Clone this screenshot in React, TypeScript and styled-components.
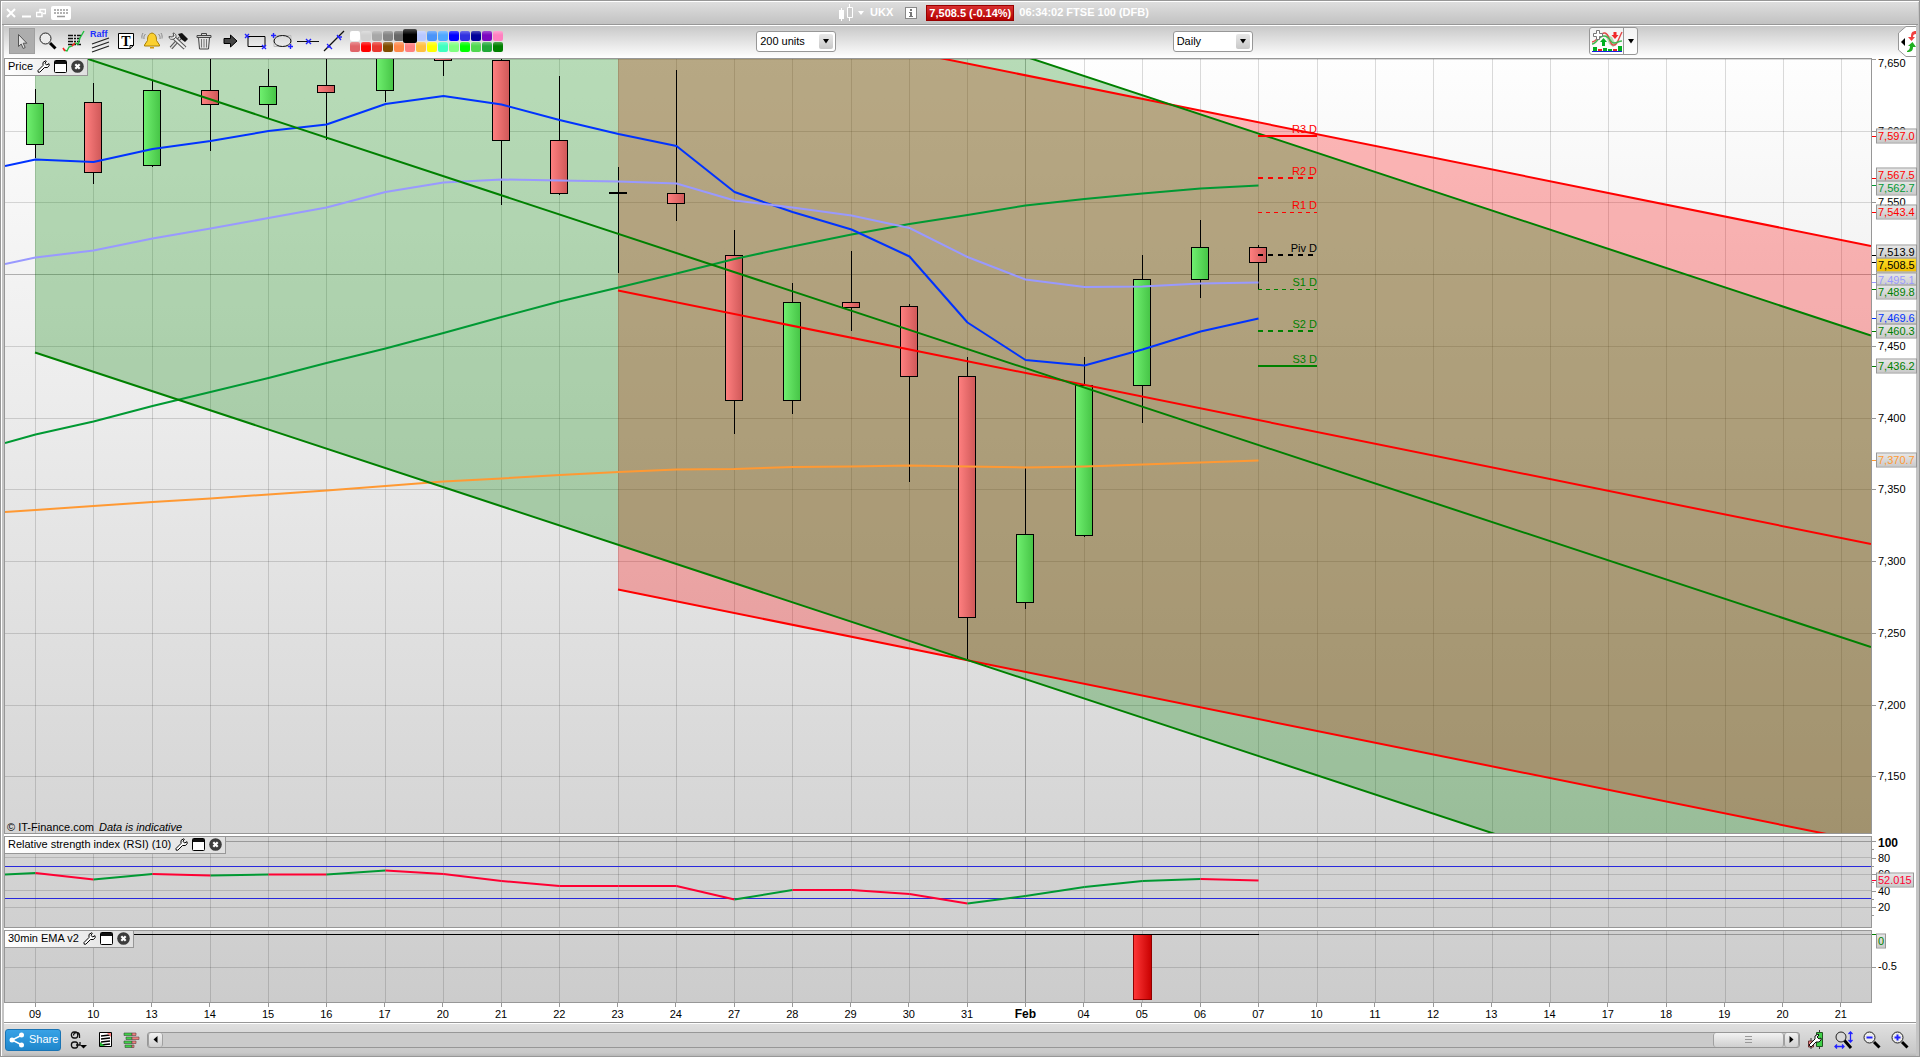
import React from 'react';
import styled, { createGlobalStyle, css } from 'styled-components';

const GlobalStyle = createGlobalStyle`
  * { box-sizing: border-box; }
  html, body { margin: 0; height: 100%; }
  body {
    font-family: "Liberation Sans", Arial, sans-serif;
    font-size: 11px;
    line-height: 13px;
    color: #000;
    background: #c0c0c0;
  }
  button, select { font: inherit; color: inherit; margin: 0; }
  svg { display: block; }
`;

const Frame = styled.div`
  display: flex;
  flex-direction: column;
  height: 100vh;
  min-height: 480px;
  border: 1px solid #979797;
  padding: 0 3px;
  background: #c4c4c4;
  box-shadow: inset 1px 1px 0 #fff;
  overflow: hidden;
`;

const TitleBar = styled.header`
  flex: none;
  display: flex;
  align-items: center;
  height: 24px;
  margin: 0 -2px;
  padding: 0 2px 1px;
  border-top: 1px solid #fff;
  border-bottom: 1px solid #979797;
  background: linear-gradient(#dedede, #c2c2c2);
  color: #fff;
`;

const WindowButtons = styled.div`
  display: flex;
  align-items: center;
  gap: 5px;
  padding-left: 2px;
`;

const PlainButton = styled.button`
  display: flex;
  align-items: center;
  justify-content: center;
  padding: 0;
  border: 0;
  background: none;
`;

const TitleInfo = styled.div`
  flex: 1;
  display: flex;
  align-items: center;
  justify-content: center;
  gap: 5px;
  font-weight: bold;
  white-space: nowrap;
`;

const Symbol = styled.span`
  padding: 0 7px 0 1px;
`;

const PriceBadge = styled.span`
  margin-left: 4px;
  padding: 0 2px;
  border: 1px solid #980000;
  line-height: 14px;
  background: linear-gradient(#d83030, #b40000);
`;

const Toolbar = styled.div`
  flex: none;
  display: flex;
  align-items: center;
  height: 33px;
  padding: 0 0 2px 5px;
  border-top: 1px solid #fff;
  background: linear-gradient(#c8c8c8, #fff);
`;

const ToolButton = styled(PlainButton)<{ $active?: boolean }>`
  width: 26px;
  height: 26px;
  ${(p) => p.$active && css`
    background: #adadad;
    border: 1px solid #a0a0a0;
  `}
`;

const Palette = styled.div`
  display: grid;
  grid-template-columns: repeat(14, 10px);
  grid-auto-rows: 10px;
  gap: 1px;
  margin-left: 3px;
`;

const Swatch = styled.button<{ $color: string; $selected?: boolean }>`
  padding: 0;
  border: 0;
  border-radius: 2px;
  background: linear-gradient(rgba(255, 255, 255, 0.3), rgba(255, 255, 255, 0) 40%), ${(p) => p.$color};
  ${(p) => p.$selected && css`
    margin: -2px;
    z-index: 1;
  `}
`;

const Spacer = styled.div<{ $grow: number }>`
  flex: ${(p) => p.$grow} 1 0;
`;

const SelectBox = styled.label`
  position: relative;
  display: block;
  width: 80px;
  height: 21px;
`;

const Select = styled.select`
  appearance: none;
  width: 100%;
  height: 100%;
  padding: 0 20px 0 3px;
  border: 1px solid #979797;
  border-radius: 3px;
  background: #fff;
`;

const Caret = styled.span`
  position: absolute;
  top: 3px;
  right: 3px;
  display: flex;
  align-items: center;
  justify-content: center;
  width: 14px;
  height: 15px;
  border-radius: 2px;
  background: linear-gradient(#e8e8e8, #c8c8c8);
  pointer-events: none;
`;

const IndicatorGroup = styled.div`
  display: flex;
  width: 49px;
  height: 28px;
  border: 1px solid #979797;
  border-radius: 3px;
  background: linear-gradient(#f2f2f2, #fff);
`;

const IndicatorButton = styled(PlainButton)<{ $wide?: boolean }>`
  flex: ${(p) => (p.$wide ? '0 0 34px' : '1')};
  border-right: ${(p) => (p.$wide ? '1px solid #979797' : '0')};
`;

const Panes = styled.main`
  flex: 1;
  min-height: 0;
  display: flex;
  flex-direction: column;
  gap: 2px;
  background: #fff;
`;

const PaneRow = styled.section<{ $height?: number }>`
  flex: ${(p) => (p.$height ? `0 0 ${p.$height}px` : '1 1 0')};
  min-height: 0;
  display: flex;
`;

const Plot = styled.div<{ $from: string; $to: string }>`
  position: relative;
  flex: 1;
  min-width: 0;
  border: 1px solid #979797;
  background: linear-gradient(${(p) => p.$from}, ${(p) => p.$to});
  overflow: hidden;
`;

const PlotSvg = styled.svg`
  width: 100%;
  height: 100%;
`;

const PaneTab = styled.div`
  position: absolute;
  top: 0;
  left: 0;
  display: flex;
  align-items: center;
  gap: 4px;
  height: 17px;
  padding: 0 3px 2px;
  border-right: 1px solid #979797;
  border-bottom: 1px solid #979797;
  background: linear-gradient(90deg, #fff, #e0e0e0);
  white-space: nowrap;
`;

const Copyright = styled.div`
  position: absolute;
  left: 2px;
  bottom: 0;
  display: flex;
  gap: 5px;
  line-height: 11px;
`;

const PivotLabel = styled.span<{ $color: string }>`
  position: absolute;
  transform: translate(-100%, -100%);
  color: ${(p) => p.$color};
  white-space: nowrap;
`;

const Axis = styled.div`
  position: relative;
  flex: 0 0 44px;
  background: #fff;
`;

const Tick = styled.span<{ $color?: string; $minor?: boolean }>`
  position: absolute;
  left: 0;
  width: ${(p) => (p.$minor ? 2 : 4)}px;
  height: 1px;
  background: ${(p) => p.$color || '#979797'};
`;

const AxisLabel = styled.span<{ $bold?: boolean }>`
  position: absolute;
  left: 6px;
  transform: translateY(-50%);
  ${(p) => p.$bold && css`
    font-size: 12px;
    font-weight: bold;
  `}
`;

const Tag = styled.span<{ $color: string; $gold?: boolean }>`
  position: absolute;
  left: 4px;
  transform: translateY(-50%);
  padding: 0 1px;
  border: 1px solid #979797;
  color: ${(p) => p.$color};
  background: ${(p) => (p.$gold ? 'linear-gradient(#ffdc28, #eebc00)' : 'linear-gradient(#e6e6e6, #cacaca)')};
`;

const DateRow = styled.div`
  flex: none;
  display: flex;
  height: 20px;
  padding: 0 46px 0 2px;
  border-bottom: 1px solid #979797;
  background: #fff;
`;

const DateCell = styled.div<{ $bold?: boolean }>`
  flex: 1 1 0;
  display: flex;
  flex-direction: column;
  align-items: center;
  gap: 1px;
  font-size: ${(p) => (p.$bold ? 12 : 11)}px;
  font-weight: ${(p) => (p.$bold ? 'bold' : 'normal')};
  &::before {
    content: "";
    width: 1px;
    height: 4px;
    background: #979797;
  }
`;

const Footer = styled.footer`
  flex: none;
  display: flex;
  align-items: center;
  height: 33px;
  padding: 0 0 1px 1px;
  border-top: 1px solid #fff;
  background: linear-gradient(#e0e0e0, #c8c8c8 90%, #b8b8b8);
`;

const ShareButton = styled.button`
  display: flex;
  align-items: center;
  gap: 4px;
  height: 22px;
  padding: 0 2px 0 3px;
  border: 1px solid #1a74b4;
  border-radius: 3px;
  background: linear-gradient(#38a2e6, #1f87cc);
  color: #fff;
`;

const FooterIcons = styled.div<{ $gap: number }>`
  display: flex;
  align-items: center;
  gap: ${(p) => p.$gap}px;
  padding: 0 7px;
`;

const ScrollBar = styled.div`
  flex: 1;
  display: flex;
  justify-content: space-between;
  height: 16px;
  border: 1px solid #979797;
  border-radius: 3px;
  background: #cbcbcb;
`;

const ScrollEnd = styled.div`
  display: flex;
`;

const ScrollPart = styled(PlainButton)<{ $width: number }>`
  width: ${(p) => p.$width}px;
  height: 14px;
  border-left: 1px solid #a0a0a0;
  border-right: 1px solid #a0a0a0;
  border-radius: 3px;
  background: linear-gradient(#f2f2f2, #cfcfcf);
`;

/* ---------- chart data ---------- */

const DAYS = ['09', '10', '13', '14', '15', '16', '17', '20', '21', '22', '23', '24', '27', '28', '29', '30', '31', 'Feb',
  '04', '05', '06', '07', '10', '11', '12', '13', '14', '17', '18', '19', '20', '21'];

const LEFT = 5;
const RIGHT = 1871;
const WIDTH = RIGHT - LEFT;
const dayX = (i: number) => Math.round(35 + i * 58.26) + 0.5;
const priceY = (p: number) => Math.round(59 + (7650 - p) * 1.4345);

// day index, high, body top, body bottom, low, rising
type Candle = [number, number, number, number, number, boolean];
const CANDLES: Candle[] = [
  [0, 89, 103.5, 144.5, 158, true],
  [1, 83, 102.5, 172.5, 184, false],
  [2, 81, 90.5, 165.5, 167, true],
  [3, 50, 90.5, 104.5, 151, false],
  [4, 69, 86.5, 104.5, 118, true],
  [5, 50, 85.5, 92.5, 140, false],
  [6, 50, 50.5, 90.5, 102, true],
  [7, 50, 50.5, 60.5, 76, false],
  [8, 50, 60.5, 140.5, 205, false],
  [9, 76, 140.5, 193.5, 195, false],
  [11, 70, 193.5, 203.5, 221, false],
  [12, 230, 255.5, 400.5, 434, false],
  [13, 283, 302.5, 400.5, 414, true],
  [14, 251, 302.5, 307.5, 331, false],
  [15, 304, 306.5, 376.5, 482, false],
  [16, 357, 376.5, 617.5, 659, false],
  [17, 467, 534.5, 602.5, 609, true],
  [18, 357, 385.5, 535.5, 537, true],
  [19, 255, 279.5, 385.5, 423, true],
  [20, 220, 247.5, 279.5, 298, true],
  [21, 245, 247.5, 262.5, 289, false],
];

const EMA_BLUE = [159.5, 162, 149, 141, 131, 124.5, 104, 96, 104.5, 120, 134, 146, 192, 212, 229.5, 256.5, 322.5, 360, 365.5, 349.5, 331.5, 318.5];
const EMA_LILAC = [257.5, 250.5, 238.5, 228.5, 218, 207.5, 192, 182.5, 179.5, 180.5, 181.5, 183.5, 200.5, 207.5, 215.5, 228, 257, 279.5, 287, 286.5, 283.5, 282.5];
const EMA_GREEN = [434.5, 421.5, 406, 392, 378, 363, 348.5, 333, 317, 301.5, 287.5, 273.5, 259, 246.5, 234.5, 224, 215, 205.5, 199, 193.5, 188.5, 185.5];
const EMA_ORANGE = [510, 506, 502, 498.5, 494.5, 490.5, 486, 481.5, 478.5, 475, 472, 469.5, 469, 467, 466.5, 465.5, 466.5, 467.5, 466.5, 464.5, 462.5, 460.5];
const RSI = [873, 879.5, 874, 875.5, 874.5, 874.5, 870.5, 874, 881, 886, 886, 886, 899.5, 890, 890, 894, 903.5, 896, 887, 881, 879, 880.5];

const path = (start: number, ys: number[]) =>
  `${LEFT},${start} ` + ys.map((y, i) => `${dayX(i)},${y}`).join(' ');

type Pivot = { name: string; y: number; color: string; width: number; dash?: string };
const PIVOTS: Pivot[] = [
  { name: 'R3 D', y: 136, color: '#ff0000', width: 2 },
  { name: 'R2 D', y: 178, color: '#ff0000', width: 2, dash: '5 5' },
  { name: 'R1 D', y: 212.5, color: '#ff0000', width: 1, dash: '4 4' },
  { name: 'Piv D', y: 255, color: '#000000', width: 2, dash: '5 5' },
  { name: 'S1 D', y: 289.5, color: '#008000', width: 1, dash: '4 4' },
  { name: 'S2 D', y: 331, color: '#008000', width: 2, dash: '5 5' },
  { name: 'S3 D', y: 366, color: '#008000', width: 2 },
];

// text, tick level, tag centre (shifted where tags would collide), colour
type TagData = [string, number, number, string];
const TAGS: TagData[] = [
  ['7,597.0', 136, 136, '#ff0000'],
  ['7,567.5', 178, 175, '#ff0000'],
  ['7,562.7', 185, 188, '#009933'],
  ['7,543.4', 212, 212, '#ff0000'],
  ['7,513.9', 255, 252, '#000000'],
  ['7,508.5', 262, 265, '#000000'],
  ['7,495.1', 282, 280, '#9999ff'],
  ['7,489.8', 289, 292, '#008000'],
  ['7,469.6', 318, 318, '#0033ff'],
  ['7,460.3', 331, 331, '#008000'],
  ['7,436.2', 366, 366, '#008000'],
  ['7,370.7', 460, 460, '#ff9933'],
];

const PRICES = [7650, 7600, 7550, 7500, 7450, 7400, 7350, 7300, 7250, 7200, 7150];
// 7,500 has its tick but its label gives way to the price tags stacked there
const LABELLED_PRICES = PRICES.filter((p) => p !== 7500);

const pct = (y: number, top: number, height: number) => `${((y - top) / height) * 100}%`;

/* ---------- icons ---------- */

const Wrench = () => (
  <svg width="13" height="13" viewBox="0 0 13 13">
    <path d="M1 10.500 6 5.500V2.500L8.500.8 9.300 1.200 8 3.200 9.500 5 12 3.700 12.200 5.500 10.500 7.500H7.500L2.800 12.200H1.200Z" fill="#fff" stroke="#000" />
  </svg>
);
const WindowIcon = () => (
  <svg width="13" height="13" viewBox="0 0 13 13">
    <rect x=".5" y=".5" width="12" height="12" rx="1" fill="#fff" stroke="#000" />
    <path d="M1 1h11v3H1z" fill="#111" />
  </svg>
);
const CloseIcon = () => (
  <svg width="13" height="13" viewBox="0 0 13 13">
    <circle cx="6.500" cy="6.500" r="6.300" fill="#3c3c3c" />
    <path d="m4.300 4.300 4.400 4.400m0-4.400-4.400 4.400" stroke="#fff" strokeWidth="2.200" />
  </svg>
);
const DownCaret = () => (
  <svg width="8" height="5" viewBox="0 0 8 5"><path d="M1 0h6L4 4.500z" fill="#000" /></svg>
);

const Magnifier = ({ children }: { children?: React.ReactNode }) => (
  <svg width="18" height="18" viewBox="0 0 18 18">
    <path d="m11 11 5.500 5.500" stroke="#000" strokeWidth="3" />
    <circle cx="6.500" cy="6.500" r="5.500" fill="#ececec" stroke="#222" />
    {children}
  </svg>
);

const TOOL_ICONS: [string, React.ReactNode][] = [
  ['Pointer', <svg width="24" height="24" viewBox="0 0 24 24"><path d="M8.500 5.500v12l2.700-2.500 2 4.500 2-1-2-4.300h3.600z" fill="#e4e4e4" stroke="#555" /></svg>],
  ['Zoom', <Magnifier />],
  ['Indicator', (
    <svg width="24" height="24" viewBox="0 0 24 24">
      <path d="M6 6.500h13M6 9.500h12M6 12.500h12M6 15.500h13" stroke="#111" strokeWidth="1.400" strokeDasharray="5 1 2 1" />
      <path d="m2 21 3 1 2-4 3-1 3-3 3 1 2-6 4-7" fill="none" stroke="#20c040" strokeWidth="1.400" />
      <path d="m1 19 2 3M10 17l3-3" stroke="#f22" strokeWidth="1.600" />
    </svg>
  )],
  ['Raff channel', (
    <svg width="24" height="26" viewBox="0 0 24 26">
      <text x="2" y="9" fontSize="9" fontWeight="bold" fill="#2030ff" fontFamily="Liberation Sans, Arial, sans-serif">Raff</text>
      <path d="m4 16 17-6M4 20l17-6M4 24l17-6" stroke="#222" strokeWidth="1.300" />
    </svg>
  )],
  ['Text', (
    <svg width="24" height="24" viewBox="0 0 24 24">
      <path d="M4.500 4.500h15v12l-3.500 3h-11.500z" fill="#fff" stroke="#000" />
      <path d="M16 19.500v-3h3.500" fill="none" stroke="#000" />
      <text x="12" y="17" fontSize="14" fontWeight="bold" textAnchor="middle" fontFamily="Liberation Serif, serif">T</text>
    </svg>
  )],
  ['Alert', (
    <svg width="24" height="24" viewBox="0 0 24 24">
      <path d="M12 4c4 1 4.500 4 4.500 7.500L19.500 16v1h-15v-1l3-4.500C7.500 8 8 5 12 4z" fill="#fbd030" stroke="#a88008" />
      <path d="M10 18h4v1.500h-4z" fill="#d89a08" />
      <path d="M5.500 5C4 6.500 3.700 8 4 10M3 4C1.800 6 1.700 8 2 9.500M18.500 5c1.500 1.500 1.800 3 1.500 5M21 4c1.200 2 1.300 4 1 5.500" fill="none" stroke="#888" />
    </svg>
  )],
  ['Settings', (
    <svg width="24" height="24" viewBox="0 0 24 24">
      <path d="m5 19 9-10" stroke="#555" strokeWidth="3.500" /><path d="m5 19 9-10" stroke="#ddd" strokeWidth="1.500" />
      <path d="m12 5 4-1 6 6-3 3-4-3z" fill="#111" />
      <path d="m6 7 13 12" stroke="#555" strokeWidth="4" /><path d="m6 7 13 12" stroke="#eee" strokeWidth="2" />
      <path d="M3 7.500C3 10 5 11 8 10L10 8C10.500 6 9 4 7 4l1 3-2 1z" fill="#eee" stroke="#555" />
    </svg>
  )],
  ['Delete', (
    <svg width="24" height="24" viewBox="0 0 24 24">
      <path d="M6.500 8.500h11L16.500 20h-9z" fill="#e4e4e4" stroke="#444" />
      <path d="M9.500 10v8.500M12 10v8.500M14.500 10v8.500" stroke="#777" />
      <path d="M5 6.500h14v2H5z" fill="#ccc" stroke="#444" /><path d="M9.500 6V4.500h5V6" fill="none" stroke="#444" />
    </svg>
  )],
  ['Arrow', <svg width="24" height="24" viewBox="0 0 24 24"><path d="M6 9.500h6.500v-3.500l6.500 6-6.500 6v-3.500H6z" fill="#444" stroke="#000" /></svg>],
  ['Rectangle', (
    <svg width="24" height="24" viewBox="0 0 24 24">
      <path d="M4 7.500h17v10H4z" fill="none" stroke="#000" />
      <path d="m1 5 4 4m0-4L1 9m17 7 4 4m0-4-4 4" stroke="#22f" strokeWidth="1.400" />
    </svg>
  )],
  ['Ellipse', (
    <svg width="24" height="24" viewBox="0 0 24 24">
      <path d="M4 6.500h17v11H4z" fill="none" stroke="#bbb" />
      <ellipse cx="12.500" cy="12" rx="8.500" ry="5.500" fill="none" stroke="#111" />
      <path d="M3.500 4v5M1 6.500h5M20.500 15v5M18 17.500h5" stroke="#22f" strokeWidth="1.400" />
    </svg>
  )],
  ['Horizontal line', (
    <svg width="24" height="24" viewBox="0 0 24 24">
      <path d="M1 12.500h22" stroke="#111" /><path d="m10 10 5 5m0-5-5 5" stroke="#22f" strokeWidth="1.400" />
    </svg>
  )],
  ['Trend line', (
    <svg width="24" height="24" viewBox="0 0 24 24">
      <path d="M2 22 22 2" stroke="#111" strokeWidth="1.300" /><path d="m5 15 5 5m5-14 4 5M5 18h4M15 8h5" stroke="#22f" strokeWidth="1.300" />
    </svg>
  )],
];

const SWATCHES = [
  '#ffffff', '#d0d0d0', '#a8a8a8', '#848484', '#686868', '#000000', '#b8c8ff', '#4a94f8', '#50a8ff', '#0000ff', '#3030e0', '#000099', '#7c08c0', '#ff80c0',
  '#e06468', '#ff0000', '#e83830', '#804c00', '#ff8848', '#ff8080', '#ffc040', '#ffff00', '#40ffc0', '#80ff80', '#00ff00', '#50d850', '#20a838', '#008000',
];

const CandlesIcon = () => (
  <svg width="15" height="18" viewBox="0 0 15 18">
    <path d="M3.500 4v13M11.500 0v17" stroke="#fff" />
    <path d="M1 6h5v9H1z" fill="#fff" /><path d="M9.500 3.500h5v10h-5z" fill="#ccc" stroke="#fff" />
  </svg>
);

const IndicatorIcon = () => (
  <svg width="32" height="24" viewBox="0 0 32 24">
    <path d="m14 5 7 3 4 8-3 2-4-3z" fill="#b4dcb4" />
    <path d="M1 13C6 13 9 3 14 4s4 11 8 12 5-5 9-13" fill="none" stroke="#e04848" strokeWidth="1.400" />
    <path d="M1 15c5 0 6-8 12-8s6 7 10 7 4-2 8-2" fill="none" stroke="#40b850" strokeWidth="1.400" />
    <path d="M11 17v-4H9l3.500-4 3.500 4h-2v4z" fill="#00b020" /><path d="M22.500 3v3h-2l3.500 4 3.500-4h-2V3z" fill="#f02828" />
    <path d="M5.500 1.500h3v3h3v3h-3v3h-3v-3h-3v-3h3z" fill="#fff" stroke="#777" />
    <path d="M2 18h4v4H2zM12 19h4v3h-4zM17 20h4v2h-4zM27 17h4v5h-4z" fill="#00b020" /><path d="M7 20h4v2H7zM22 20h4v2h-4z" fill="#e02828" />
    <path d="M1 22.500h30" stroke="#1820e0" />
  </svg>
);

const HandleIcon = () => (
  <svg width="18" height="31" viewBox="0 0 18 31">
    <path d="M18 .5H8L.5 7v17L8 30.500h10" fill="#fff" stroke="#979797" />
    <path d="M7 12v8l-4-4z" fill="#000" />
    <path d="M18 5c-4 0-5 2-5 6h-3l3.500 4L17 11h-2c0-2 1-3 3-3z" fill="#f04040" />
    <path d="M9 26c5 0 6-2 6-5h3l-3.500-5L10 20h2c0 3-1 4-3 5z" fill="#20b020" />
  </svg>
);

/* ---------- chart parts ---------- */

const Verticals = ({ top, bottom }: { top: number; bottom: number }) => (
  <g shapeRendering="crispEdges">
    {DAYS.map((_, i) => (
      <path key={i} d={`M${dayX(i)} ${top}V${bottom}`} stroke="#000" strokeOpacity={i === 17 ? 0.28 : 0.14} />
    ))}
  </g>
);

const Tab = ({ title }: { title: string }) => (
  <PaneTab>
    <span>{title}</span>
    <PlainButton aria-label={`${title} settings`}><Wrench /></PlainButton>
    <PlainButton aria-label={`${title} window`}><WindowIcon /></PlainButton>
    <PlainButton aria-label={`Close ${title}`}><CloseIcon /></PlainButton>
  </PaneTab>
);

const PricePlot = () => (
  <PlotSvg viewBox={`${LEFT} 59 ${WIDTH} 774`} preserveAspectRatio="none">
    <defs>
      <linearGradient id="up"><stop stopColor="#70f070" /><stop offset="1" stopColor="#46c446" /></linearGradient>
      <linearGradient id="down"><stop stopColor="#ff8080" /><stop offset="1" stopColor="#cf5858" /></linearGradient>
    </defs>
    <Verticals top={59} bottom={833} />
    <g shapeRendering="crispEdges">
      {PRICES.map((p) => (
        <path key={p} d={`M${LEFT} ${priceY(p) + 0.5}H${RIGHT}`} stroke="#000" strokeOpacity={p === 7500 ? 0.28 : 0.14} />
      ))}
    </g>
    <path d="M618-7 1871 246V843L618 590z" fill="#ff0000" fillOpacity=".28" />
    <path d="M35-270 1871 335.500V958L35 352.500z" fill="#008000" fillOpacity=".28" />
    <g shapeRendering="crispEdges">
      {CANDLES.map(([i, high, top, bottom, low, rising]) => (
        <g key={i} stroke="#000">
          <path d={`M${dayX(i)} ${high}V${low}`} />
          <rect x={dayX(i) - 9} y={top} width={17} height={bottom - top} fill={rising ? 'url(#up)' : 'url(#down)'} />
        </g>
      ))}
      <path d="M618.500 167V273" stroke="#000" />
      <path d="M609 193H627" stroke="#000" strokeWidth="2" />
    </g>
    <g fill="none" strokeWidth="2" strokeLinejoin="round">
      <polyline points={path(512, EMA_ORANGE)} stroke="#ff9933" />
      <polyline points={path(443, EMA_GREEN)} stroke="#009933" />
      <polyline points={path(166, EMA_BLUE)} stroke="#0033ff" />
      <polyline points={path(264, EMA_LILAC)} stroke="#9999ff" />
      <path d="M618-7 1871 246M618 290.500 1871 544M618 589.500 1871 843" stroke="#ff0000" />
      <path d="M35-270 1871 335.500M35 41.500 1871 647M35 352.500 1871 958" stroke="#008000" />
      {PIVOTS.map((p) => (
        <path key={p.name} d={`M1258 ${p.y}H1317`} stroke={p.color} strokeWidth={p.width} strokeDasharray={p.dash} shapeRendering="crispEdges" />
      ))}
    </g>
  </PlotSvg>
);

const RsiPlot = () => (
  <PlotSvg viewBox={`${LEFT} 837 ${WIDTH} 90`} preserveAspectRatio="none">
    <Verticals top={837} bottom={927} />
    <g shapeRendering="crispEdges">
      {[841, 857, 874, 890, 907].map((y) => (
        <path key={y} d={`M${LEFT} ${y + 0.5}H${RIGHT}`} stroke="#000" strokeOpacity={y === 841 ? 0.28 : 0.14} />
      ))}
      <path d={`M${LEFT} 866.500H${RIGHT}M${LEFT} 898.500H${RIGHT}`} stroke="#2828dc" />
    </g>
    {RSI.map((y, i) => {
      const x0 = i ? dayX(i - 1) : LEFT;
      const y0 = i ? RSI[i - 1] : 874.5;
      return <path key={i} d={`M${x0} ${y0}L${dayX(i)} ${y}`} stroke={y < y0 ? '#009933' : '#ff0033'} strokeWidth="2" />;
    })}
  </PlotSvg>
);

const EmaPlot = () => (
  <PlotSvg viewBox={`${LEFT} 931 ${WIDTH} 71`} preserveAspectRatio="none">
    <defs>
      <linearGradient id="bar"><stop stopColor="#ff3838" /><stop offset="1" stopColor="#c80000" /></linearGradient>
    </defs>
    <Verticals top={931} bottom={1002} />
    <g shapeRendering="crispEdges">
      <path d={`M${LEFT} 934.500H${RIGHT}`} stroke="#000" strokeOpacity=".28" />
      <path d={`M${LEFT} 967.500H${RIGHT}`} stroke="#000" strokeOpacity=".14" />
      <rect x="1133.500" y="934.500" width="18" height="65" fill="url(#bar)" stroke="#900000" />
      <path d={`M${LEFT} 934.500H1259`} stroke="#000" />
    </g>
  </PlotSvg>
);

export default function App() {
  return (
    <>
      <GlobalStyle />
      <Frame>
        <TitleBar>
          <WindowButtons>
            <PlainButton aria-label="Close">
              <svg width="10" height="10" viewBox="0 0 10 10"><path d="m1 1 8 8m0-8L1 9" stroke="#fff" strokeWidth="2" /></svg>
            </PlainButton>
            <PlainButton aria-label="Minimise">
              <svg width="10" height="10" viewBox="0 0 10 10"><path d="M1 8.500h9" stroke="#fff" strokeWidth="2" /></svg>
            </PlainButton>
            <PlainButton aria-label="Restore">
              <svg width="10" height="10" viewBox="0 0 10 10"><path d="M4 4V1.500h5.500v4H7M.5 4.500h5.500v4H.5z" fill="none" stroke="#fff" strokeWidth="1.500" /></svg>
            </PlainButton>
            <PlainButton aria-label="Keyboard">
              <svg width="20" height="14" viewBox="0 0 20 14">
                <rect width="20" height="14" rx="2" fill="#fff" />
                <path d="M3 4h14M3 7h14" stroke="#999" strokeWidth="1.600" strokeDasharray="2 1" /><path d="M6 10.500h8" stroke="#999" strokeWidth="1.500" />
              </svg>
            </PlainButton>
          </WindowButtons>
          <TitleInfo>
            <CandlesIcon />
            <svg width="6" height="4" viewBox="0 0 6 4"><path d="M0 0h6L3 4z" fill="#fff" /></svg>
            <Symbol>UKX</Symbol>
            <svg width="12" height="12" viewBox="0 0 12 12">
              <rect x=".5" y=".5" width="11" height="11" fill="#fff" stroke="#888" />
              <path d="M5 2h2v2H5zM4 5h3v4h1v1H4V9h1V6H4z" fill="#777" />
            </svg>
            <PriceBadge>7,508.5 (-0.14%)</PriceBadge>
            <span>06:34:02 FTSE 100 (DFB)</span>
          </TitleInfo>
        </TitleBar>

        <Toolbar>
          {TOOL_ICONS.map(([name, icon], i) => (
            <ToolButton key={name} aria-label={name} $active={i === 0}>{icon}</ToolButton>
          ))}
          <Palette>
            {SWATCHES.map((c, i) => <Swatch key={c} aria-label={`Colour ${c}`} $color={c} $selected={i === 5} />)}
          </Palette>
          <Spacer $grow={76} />
          <SelectBox>
            <Select aria-label="Units"><option>200 units</option></Select>
            <Caret><DownCaret /></Caret>
          </SelectBox>
          <Spacer $grow={101} />
          <SelectBox>
            <Select aria-label="Timeframe"><option>Daily</option></Select>
            <Caret><DownCaret /></Caret>
          </SelectBox>
          <Spacer $grow={101} />
          <IndicatorGroup>
            <IndicatorButton $wide aria-label="Add indicator"><IndicatorIcon /></IndicatorButton>
            <IndicatorButton aria-label="Indicator list"><DownCaret /></IndicatorButton>
          </IndicatorGroup>
          <Spacer $grow={78} />
          <PlainButton aria-label="Open order panel"><HandleIcon /></PlainButton>
        </Toolbar>

        <Panes>
          <PaneRow>
            <Plot $from="#fefefe" $to="#d5d5d5">
              <PricePlot />
              {PIVOTS.map((p) => (
                <PivotLabel
                  key={p.name}
                  $color={p.color}
                  style={{ left: pct(1317, LEFT, WIDTH), top: pct(Math.floor(p.y), 59, 774) }}
                >
                  {p.name}
                </PivotLabel>
              ))}
              <Tab title="Price" />
              <Copyright><span>© IT-Finance.com</span><em>Data is indicative</em></Copyright>
            </Plot>
            <Axis>
              {PRICES.map((p) => <Tick key={p} style={{ top: pct(priceY(p), 58, 776) }} />)}
              {LABELLED_PRICES.map((p) => (
                <AxisLabel key={p} style={{ top: pct(p === 7650 ? 63 : priceY(p), 58, 776) }}>
                  {p.toLocaleString('en-US')}
                </AxisLabel>
              ))}
              {TAGS.map(([text, level, at, color]) => (
                <React.Fragment key={text}>
                  <Tick $color={color} style={{ top: pct(level, 58, 776) }} />
                  <Tag $color={color} $gold={text === '7,508.5'} style={{ top: pct(at, 58, 776) }}>{text}</Tag>
                </React.Fragment>
              ))}
            </Axis>
          </PaneRow>

          <PaneRow $height={92}>
            <Plot $from="#d5d5d5" $to="#d0d0d0">
              <RsiPlot />
              <Tab title="Relative strength index (RSI) (10)" />
            </Plot>
            <Axis>
              {[100, 90, 80, 70, 60, 50, 40, 30, 20, 10].map((v) => {
                const y = 841 + (100 - v) * 0.825;
                const major = v % 20 === 0;
                return (
                  <React.Fragment key={v}>
                    <Tick $minor={!major} style={{ top: pct(y, 836, 92) }} />
                    {major && (
                      <AxisLabel $bold={v === 100} style={{ top: pct(v === 100 ? y + 2 : y, 836, 92) }}>{v}</AxisLabel>
                    )}
                  </React.Fragment>
                );
              })}
              <Tick $color="#ff0033" style={{ top: pct(880, 836, 92) }} />
              <Tag $color="#ff0033" style={{ top: pct(880, 836, 92) }}>52.015</Tag>
            </Axis>
          </PaneRow>

          <PaneRow $height={73}>
            <Plot $from="#d0d0d0" $to="#cccccc">
              <EmaPlot />
              <Tab title="30min EMA v2" />
            </Plot>
            <Axis>
              <Tick $color="#008000" style={{ top: pct(934, 930, 73) }} />
              <Tick style={{ top: pct(967, 930, 73) }} />
              <Tag $color="#008000" style={{ top: pct(941, 930, 73) }}>0</Tag>
              <AxisLabel style={{ top: pct(966, 930, 73) }}>-0.5</AxisLabel>
            </Axis>
          </PaneRow>
        </Panes>

        <DateRow>
          {DAYS.map((d, i) => <DateCell key={i} $bold={d === 'Feb'}>{d}</DateCell>)}
        </DateRow>

        <Footer>
          <ShareButton>
            <svg width="16" height="16" viewBox="0 0 16 16">
              <path d="M13 3 3 8l10 5" fill="none" stroke="#fff" strokeWidth="1.500" />
              <circle cx="12.500" cy="3" r="2.500" fill="#fff" /><circle cx="3" cy="8" r="2.500" fill="#fff" /><circle cx="12.500" cy="13" r="2.500" fill="#fff" />
            </svg>
            Share
          </ShareButton>
          <FooterIcons $gap={11}>
            <PlainButton aria-label="Link windows">
              <svg width="20" height="18" viewBox="0 0 20 18">
                <path d="M8.500 7H6C2.500 7 2.500 1 6 1h1.500c3 0 3 6 0 6M5.500 4.500c0-4 6-4 6 0V7M8.500 17H6c-3.500 0-3.500-6 0-6h1.500c3 0 3 6 0 6M8 14h4v-3" fill="none" stroke="#111" strokeWidth="1.300" />
                <path d="M12 14h7l-3.500 3.500z" fill="#000" />
              </svg>
            </PlainButton>
            <PlainButton aria-label="Order list">
              <svg width="13" height="15" viewBox="0 0 13 15">
                <path d="M.5.5h12v14H.5z" fill="#fff" stroke="#000" />
                <path d="m2 4 9-1M2 7l9-1M2 10l9-1M2 13l9-1" stroke="#000" strokeWidth="1.500" />
                <path d="M8 1h4v4z" fill="#f88080" /><path d="M1 10v4h5z" fill="#20b030" />
              </svg>
            </PlainButton>
            <PlainButton aria-label="Market depth">
              <svg width="17" height="16" viewBox="0 0 17 16">
                <path d="M1 1h8v2.500H1zM3 5h6v2.500H3zM1 9h8v2.500H1zM2 13h7v2.500H2z" fill="#40d048" stroke="#385038" strokeWidth=".6" />
                <path d="M9 1h4v2.500H9zM9 5h7v2.500H9zM9 9h4v2.500H9zM9 13h2v2.500H9z" fill="#f08080" stroke="#604040" strokeWidth=".6" />
              </svg>
            </PlainButton>
          </FooterIcons>
          <ScrollBar>
            <ScrollPart $width={15} aria-label="Scroll left">
              <svg width="5" height="7" viewBox="0 0 5 7"><path d="M4.500 0v7L.5 3.500z" /></svg>
            </ScrollPart>
            <ScrollEnd>
              <ScrollPart $width={71} aria-label="Scroll position">
                <svg width="7" height="7" viewBox="0 0 7 7"><path d="M0 .5h7M0 3.500h7M0 6.500h7" stroke="#999" /></svg>
              </ScrollPart>
              <ScrollPart $width={15} aria-label="Scroll right">
                <svg width="5" height="7" viewBox="0 0 5 7"><path d="M.5 0v7l4-3.500z" /></svg>
              </ScrollPart>
            </ScrollEnd>
          </ScrollBar>
          <FooterIcons $gap={10}>
            <PlainButton aria-label="Chart settings">
              <svg width="17" height="20" viewBox="0 0 17 20">
                <path d="M4 8v11M12.500 0v19" stroke="#333" /><path d="M1.500 11h5v6h-5z" fill="#f08080" stroke="#633" /><path d="M9.500 2.500h6v14h-6z" fill="#40d048" stroke="#252" />
                <path d="m2 15 6-6V6l3-2 1 1-2 2 2 2 2-1v2l-2 2H9l-5 5z" fill="#fff" stroke="#111" />
              </svg>
            </PlainButton>
            <PlainButton aria-label="Fit to window">
              <svg width="19" height="18" viewBox="0 0 19 18">
                <path d="m10 9 7 8" stroke="#000" strokeWidth="3" /><circle cx="7" cy="6" r="5" fill="#d8d8d8" stroke="#222" />
                <path d="M16.500 1v10M14.500 3l2-2 2 2M14.500 9l2 2 2-2M1 15.500h9M3 13.500l-2 2 2 2M8 13.500l2 2-2 2" fill="none" stroke="#22f" strokeWidth="1.300" />
              </svg>
            </PlainButton>
            <PlainButton aria-label="Zoom out"><Magnifier><path d="M3.500 6.500h6" stroke="#22f" strokeWidth="2" /></Magnifier></PlainButton>
            <PlainButton aria-label="Zoom in"><Magnifier><path d="M3.500 6.500h6m-3-3v6" stroke="#22f" strokeWidth="2" /></Magnifier></PlainButton>
          </FooterIcons>
        </Footer>
      </Frame>
    </>
  );
}
